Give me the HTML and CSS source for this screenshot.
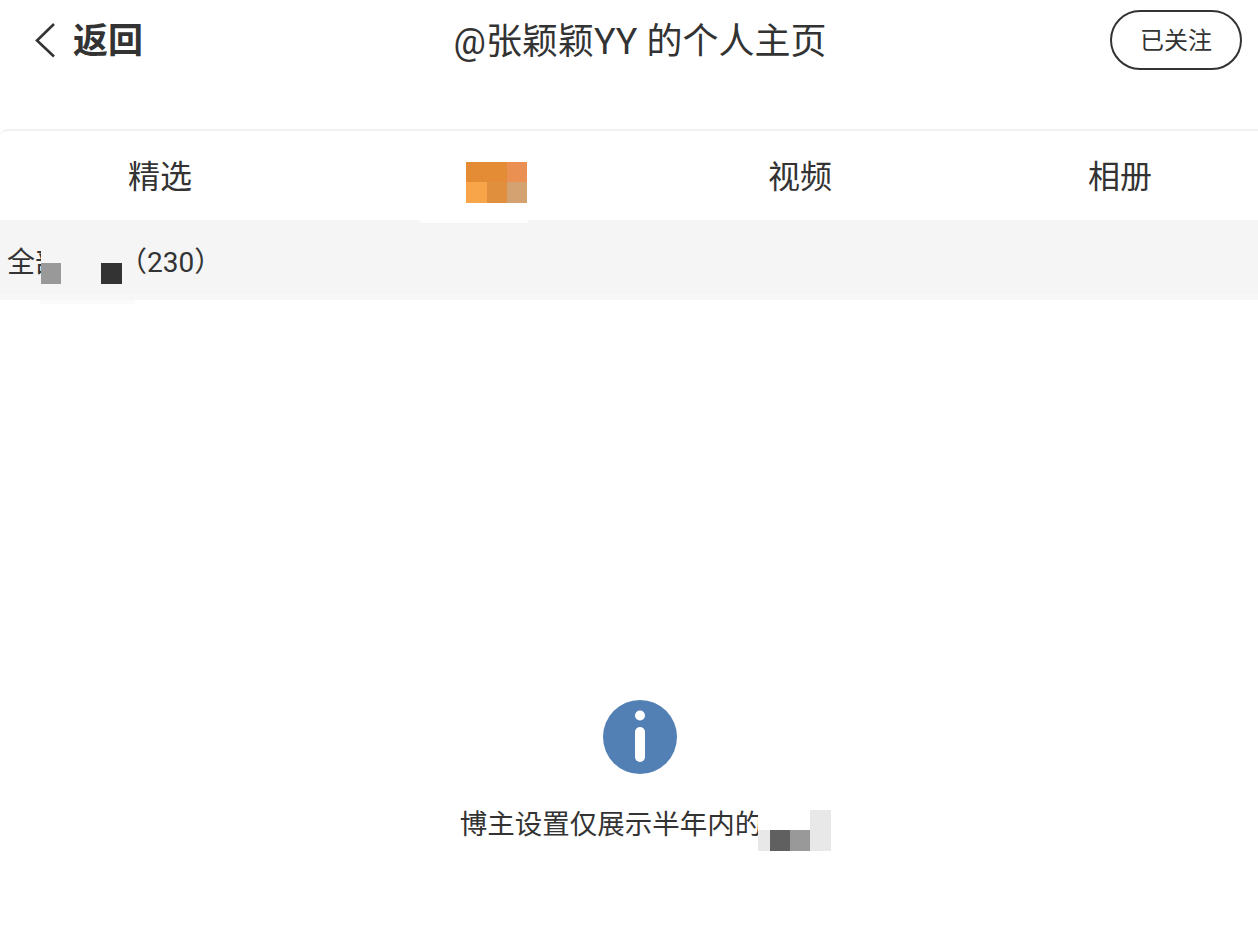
FILE: index.html
```html
<!DOCTYPE html>
<html>
<head>
  <title>个人主页</title>
  <link rel="stylesheet" href="styles.css">
</head>
<body>
<div class="page">

  <div class="header">
    <div class="back">
      <svg class="back-icon" width="22" height="36" viewBox="0 0 22 36">
        <path d="M20 2 L3 18.5 L20 34.5" fill="none" stroke="#333" stroke-width="2.6"/>
      </svg>
      <span class="back-text">返回</span>
    </div>
    <div class="title">@张颖颖YY 的个人主页</div>
    <div class="header-right">
      <button class="follow">已关注</button>
    </div>
  </div>

  <div class="tabs">
    <div class="tab">精选</div>
    <div class="tab tab-hidden">
      <div class="mosaic mosaic-tab">
        <i class="c1"></i><i class="c1"></i><i class="c2"></i>
        <i class="c3"></i><i class="c4"></i><i class="c5"></i>
      </div>
    </div>
    <div class="tab">视频</div>
    <div class="tab">相册</div>
  </div>

  <div class="filter">
    <span class="filter-text">全部微博（230）</span>
    <div class="mosaic mosaic-filter">
      <i class="none"></i><i class="none"></i><i class="none"></i><i class="none"></i>
      <i class="g1"></i><i class="none"></i><i class="none"></i><i class="g2"></i>
    </div>
  </div>

  <div class="empty">
    <svg class="info-icon" width="74" height="74" viewBox="0 0 74 74">
      <circle cx="37" cy="37" r="37" fill="#5280b4"/>
      <circle cx="37" cy="15.5" r="5" fill="#fff"/>
      <rect x="32" y="27" width="10" height="35" rx="5" fill="#fff"/>
    </svg>
    <div class="empty-text">
      博主设置仅展示半年内的<span class="covered">微博</span>
      <div class="mosaic mosaic-empty">
        <i class="w"></i><i class="w"></i><i class="w"></i><i class="g3"></i>
        <i class="g3"></i><i class="g4"></i><i class="g1"></i><i class="g3"></i>
      </div>
    </div>
  </div>

</div>
</body>
</html>
```

FILE: styles.css
```css
body {
  margin: 0;
  background-color: #fff;
  color: #333;
  font-family: Roboto, "Noto Sans CJK SC", sans-serif;
  height: 936px;
  overflow: hidden;
}
.page {
  width: 1280px;
}

.header {
  display: grid;
  grid-template-columns: 1fr auto 1fr;
  align-items: center;
  height: 80px;
  margin-bottom: 49px;
}
.back {
  display: flex;
  align-items: center;
  padding-left: 34px;
  font-size: 35px;
  font-weight: 700;
  line-height: 76px;
}
.back-icon {
  margin-right: 17px;
}
.back-text {
  padding-top: 4px;
}
.title {
  padding-top: 4px;
  font-size: 36px;
  line-height: 76px;
}
.header-right {
  display: flex;
  justify-content: flex-end;
  padding-right: 38px;
}
.follow {
  width: 132px;
  height: 60px;
  padding: 0 0 3px;
  background-color: #fff;
  border: 2px solid #333;
  border-radius: 30px;
  color: #333;
  font-family: inherit;
  font-size: 24px;
}

.tabs {
  display: grid;
  grid-template-columns: repeat(4, 1fr);
  height: 89px;
  border-top: 2px solid #f1f1f1;
  border-radius: 8px 0 0 8px;
}
.tab {
  display: flex;
  align-items: center;
  justify-content: center;
  padding-bottom: 4px;
  font-size: 32px;
}
.tab-hidden {
  position: relative;
  z-index: 1;
}
.tab-hidden::after {
  content: "";
  position: absolute;
  left: 100px;
  bottom: -3px;
  width: 108px;
  height: 3px;
  background-color: #fdfdfd;
}

.filter {
  position: relative;
  height: 74px;
  padding-left: 7px;
  background-color: #f5f5f5;
  border-bottom: 6px solid #f7f7f7;
  font-size: 28px;
  line-height: 86px;
}
.filter::after {
  content: "";
  position: absolute;
  left: 40px;
  top: 80px;
  width: 95px;
  height: 4px;
  background-color: #fbfbfb;
}

.mosaic {
  position: absolute;
  display: grid;
}
.mosaic i {
  display: block;
}
.mosaic-tab {
  left: 146px;
  top: 31px;
  grid-template-columns: 21px 20px 20px;
  grid-template-rows: 20px 21px;
}
.mosaic-filter {
  left: 41px;
  top: 22px;
  background-color: #f5f5f5;
  grid-template-columns: 20px 20px 20px 21px;
  grid-template-rows: 21px 21px;
}
.c1 { background-color: #e48c35; }
.c2 { background-color: #ea9052; }
.c3 { background-color: #f8a448; }
.c4 { background-color: #e08f3c; }
.c5 { background-color: #d4a270; }
.g1 { background-color: #999; }
.g2 { background-color: #333; }
.g3 { background-color: #e8e8e8; }
.g4 { background-color: #606060; }
.w { background-color: #fff; }

.empty {
  display: flex;
  flex-direction: column;
  align-items: center;
  padding-top: 400px;
}
.info-icon {
  display: block;
}
.empty-text {
  position: relative;
  margin-top: 29px;
  padding-right: 3px;
  font-size: 27.5px;
  line-height: 44px;
}
.covered {
  visibility: hidden;
}
.mosaic-empty {
  right: -11px;
  top: 7px;
  grid-template-columns: 12px 20px 20px 21px;
  grid-template-rows: 20px 21px;
}
```
